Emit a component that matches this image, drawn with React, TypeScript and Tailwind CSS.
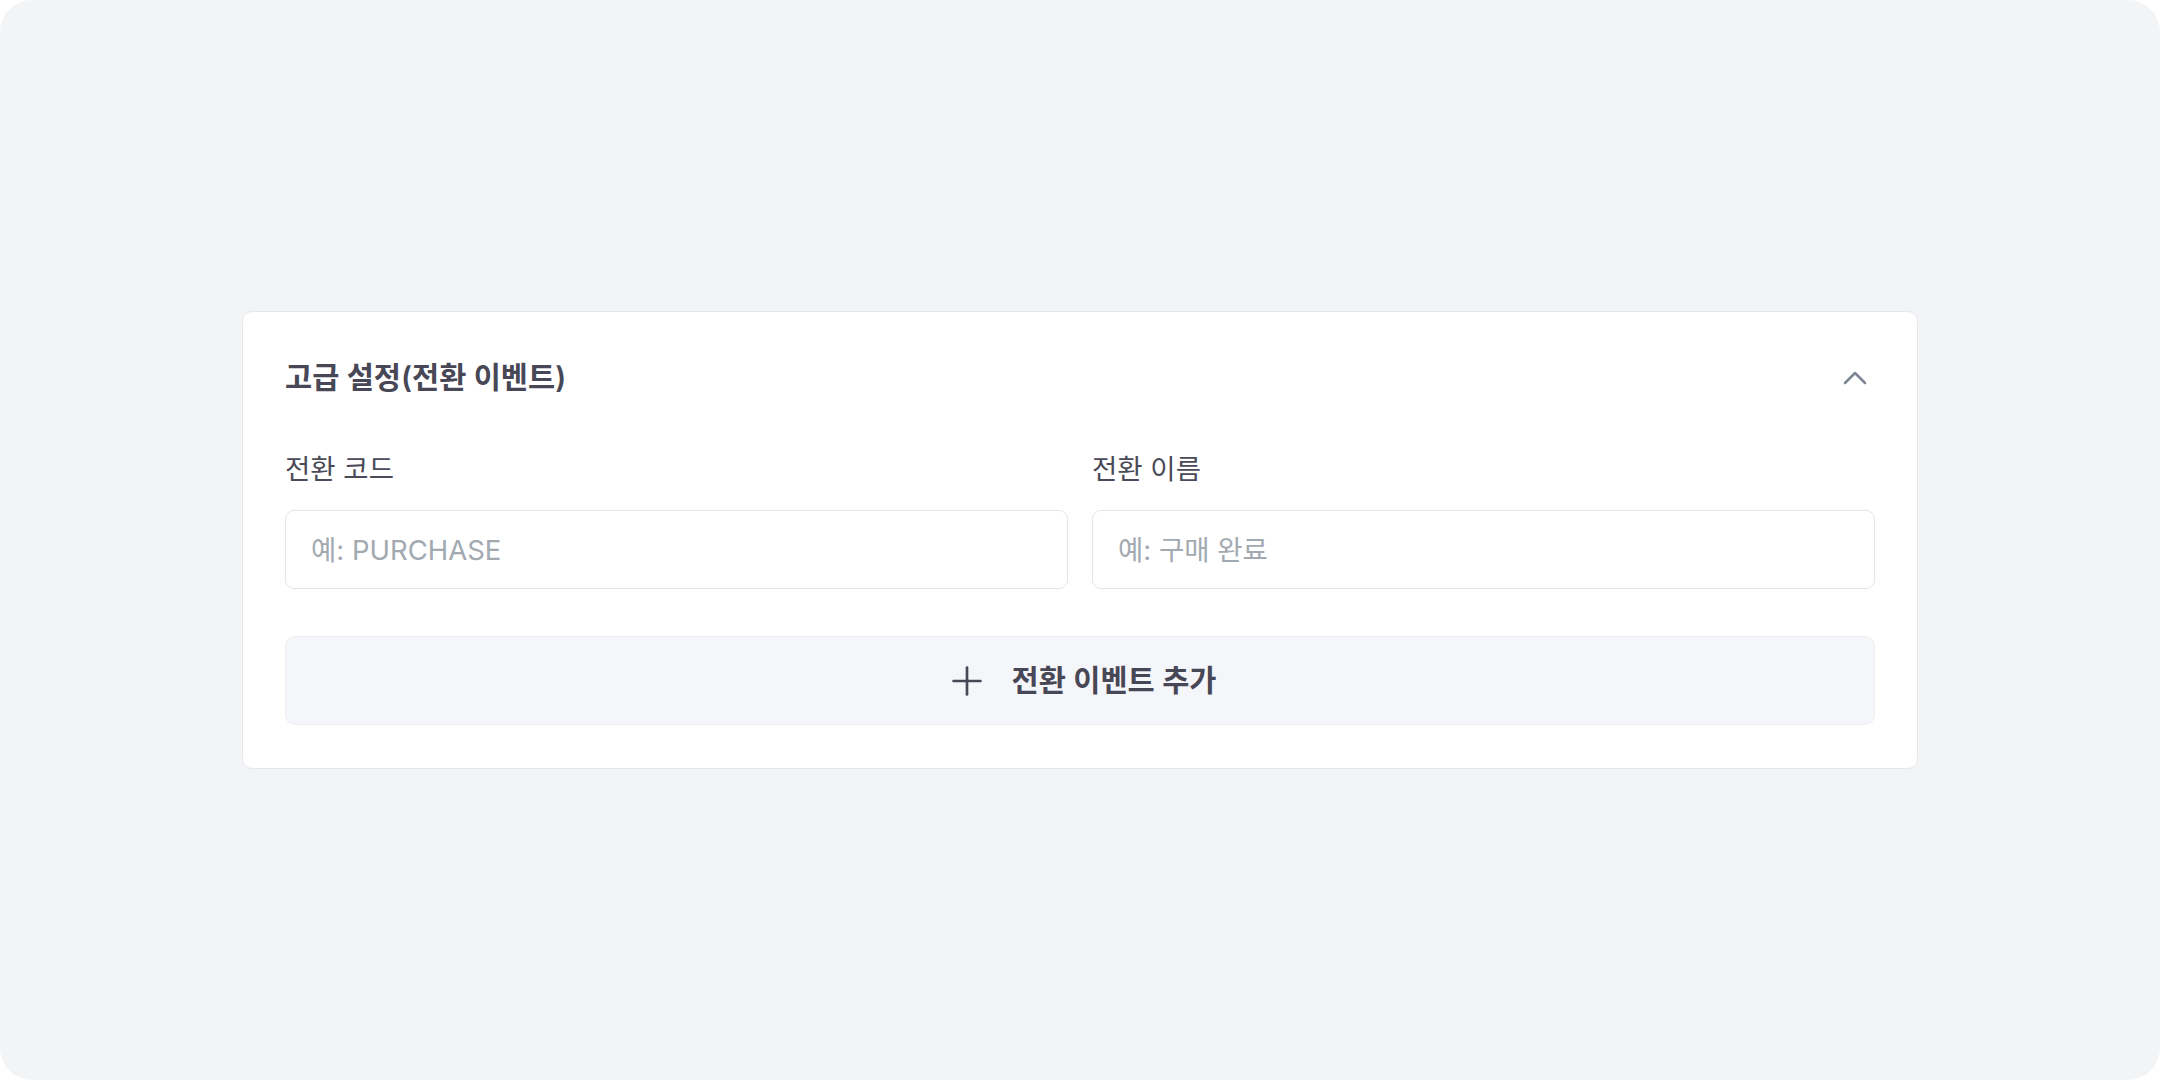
import { ChevronUp, Plus } from "lucide-react";

export default function App() {
  return (
    <div className="min-h-screen w-full bg-white font-['Inter','Noto_Sans_CJK_KR',sans-serif]">
      <div className="flex h-screen w-full items-center justify-center rounded-[32px] bg-[#f3f4f6]">
        <section className="flex w-[1676px] flex-col rounded-[10px] border-[1.5px] border-[#e5e7eb] bg-white px-[42px] pt-[42px] pb-[43px]">
          <div className="flex h-[47px] items-center justify-between">
            <h2 className="text-[29.5px] font-semibold leading-none text-[#474756]">고급 설정(전환 이벤트)</h2>
            <button type="button" className="text-[#7c8691]">
              <ChevronUp size={40} strokeWidth={1.5} />
            </button>
          </div>

          <div className="mt-[50px] grid grid-cols-2 gap-[24px]">
            {[
              { label: "전환 코드", placeholder: "예: PURCHASE" },
              { label: "전환 이름", placeholder: "예: 구매 완료" },
            ].map((f) => (
              <label key={f.label} className="flex flex-col">
                <span className="mb-[23px] h-[36px] text-[27.5px] leading-[36px] text-[#4a4a59]">{f.label}</span>
                <input
                  placeholder={f.placeholder}
                  className="h-[79px] w-full rounded-[9px] border-[1.5px] border-[#e3e5e9] bg-white px-[25px] text-[27.5px] text-[#374151] outline-none placeholder:text-[#a2a9b1]"
                />
              </label>
            ))}
          </div>

          <button
            type="button"
            className="mt-[47px] flex h-[89px] w-full items-center justify-center gap-[22px] rounded-[10px] border-[1.5px] border-[#eceef2] bg-[#f5f6fa] text-[#474756]"
          >
            <Plus size={46} strokeWidth={1.4} />
            <span className="text-[29.5px] font-semibold">전환 이벤트 추가</span>
          </button>
        </section>
      </div>
    </div>
  );
}
